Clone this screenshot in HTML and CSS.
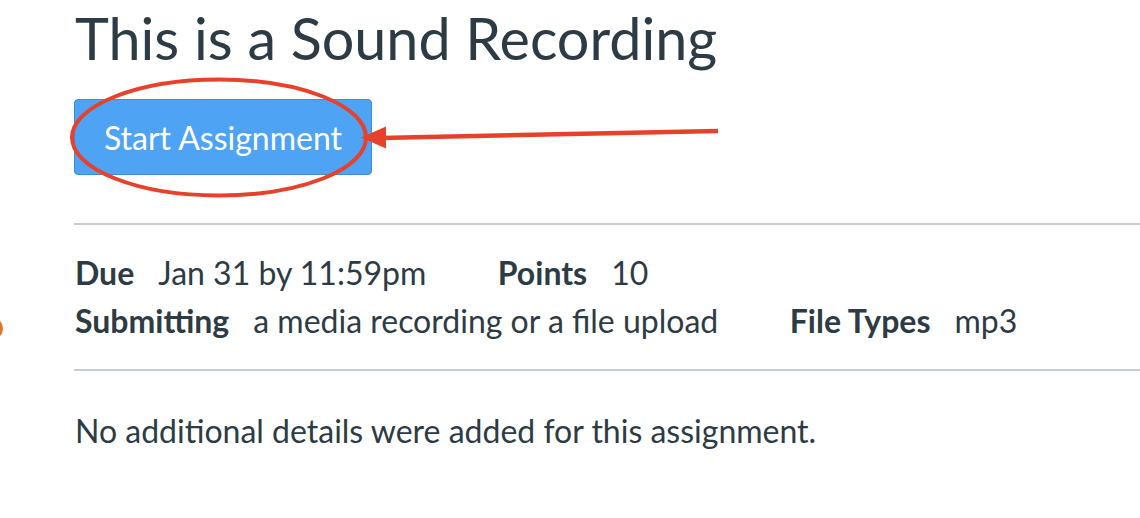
FILE: index.html
```html
<!DOCTYPE html>
<html lang="en">
<head>
<meta charset="utf-8">
<title>This is a Sound Recording</title>
<link rel="stylesheet" href="styles.css">
</head>
<body>
<div class="side-dot"></div>
<main class="page">
  <h1 class="title">This is a Sound Recording</h1>
  <button class="btn-start" type="button">Start Assignment</button>
  <hr class="rule">
  <div class="details">
    <div class="row">
      <div class="item"><span class="label">Due</span><span class="value">Jan 31 by 11:59pm</span></div>
      <div class="item"><span class="label">Points</span><span class="value">10</span></div>
    </div>
    <div class="row">
      <div class="item"><span class="label">Submitting</span><span class="value">a media recording or a file upload</span></div>
      <div class="item"><span class="label">File Types</span><span class="value">mp3</span></div>
    </div>
  </div>
  <hr class="rule rule-second">
  <p class="desc">No additional details were added for this assignment.</p>
</main>
<svg class="annot" width="1140" height="518" viewBox="0 0 1140 518" aria-hidden="true">
  <ellipse cx="219" cy="137.5" rx="147" ry="58" fill="none" stroke="#e8412b" stroke-width="4"/>
  <line x1="718" y1="131" x2="380" y2="138" stroke="#e8412b" stroke-width="4.5"/>
  <polygon points="361,137.5 386,126.5 386,148.5" fill="#e8412b"/>
</svg>
</body>
</html>
```
FILE: styles.css
```css
html, body {
  margin: 0;
  padding: 0;
  background: #ffffff;
}
body {
  width: 1140px;
  height: 518px;
  overflow: hidden;
  position: relative;
  font-family: "Lato", "Liberation Sans", sans-serif;
  color: #2d3b45;
}
.page {
  padding-left: 74px;
}
.title {
  margin: 3px 0 0 1px;
  font-size: 57.5px;
  line-height: 70px;
  font-weight: 400;
  color: #2d3b45;
}
.btn-start {
  display: flex;
  align-items: center;
  justify-content: center;
  margin-top: 26px;
  width: 298px;
  height: 76px;
  padding: 0;
  border: 1px solid #3f8cd8;
  border-radius: 4px;
  background: #4ea3f5;
  color: #ffffff;
  font-family: "Lato", "Liberation Sans", sans-serif;
  font-size: 32px;
  font-weight: 400;
}
.rule {
  margin: 48px 0 0 0;
  border: 0;
  height: 2px;
  background: #c7cdd1;
}
.details {
  margin-top: 24px;
  display: flex;
  flex-direction: column;
  padding-left: 1px;
}
.row {
  display: flex;
  gap: 71.5px;
  font-size: 32px;
  line-height: 48px;
}
.item {
  display: flex;
  gap: 24px;
}
.label {
  font-weight: 700;
}
.value {
  font-weight: 400;
}
.rule-second {
  margin-top: 24px;
}
.desc {
  margin: 36px 0 0 1px;
  font-size: 32px;
  line-height: 48px;
}
.side-dot {
  position: absolute;
  left: -20px;
  top: 317px;
  width: 23px;
  height: 23px;
  border-radius: 50%;
  background: #e8732c;
}
.annot {
  position: absolute;
  left: 0;
  top: 0;
  pointer-events: none;
}
```
